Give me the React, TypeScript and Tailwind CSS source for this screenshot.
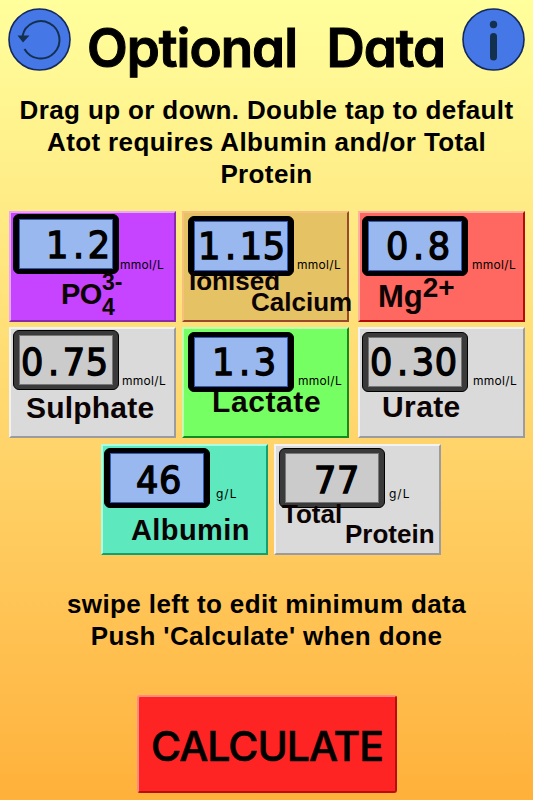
import { clsx } from "clsx";

type Reading = {
  value: string;
  unit: string;
  active: boolean;
  tile: string;
  display: string;
  digits: string;
  unitPos: string;
  label: React.ReactNode;
};

const GREY_TILE = "bg-[#dadada] border-t-[#f2f2f2] border-l-[#f2f2f2] border-r-[#9c9ca0] border-b-[#9c9ca0]";

const TOP_ROW: Reading[] = [
  {
    value: "1.2",
    unit: "mmol/L",
    active: true,
    tile: "bg-[#c643ff] border-t-[#e6a8f0] border-l-[#e6a8f0] border-r-[#8a2aa8] border-b-[#8a2aa8]",
    display: "ml-[2px] mt-[1px]",
    digits: "pl-[26px] pt-px",
    unitPos: "ml-[1px] mt-[45px]",
    label: (
      <div className="flex pl-[50px] text-[29px] leading-[40px]">
        <span className="tracking-[-0.5px]">PO</span>
        <span className="-mt-[4px] flex flex-col text-[23px] leading-[25px]">
          <span>3-</span>
          <span>4</span>
        </span>
      </div>
    ),
  },
  {
    value: "1.15",
    unit: "mmol/L",
    active: true,
    tile: "bg-[#e5c263] border-t-[#f8c07c] border-l-[#f8c07c] border-r-[#98482c] border-b-[#98482c] mr-[3px]",
    display: "ml-[4px] mt-[3px]",
    digits: "pl-[3px]",
    unitPos: "ml-[3px] mt-[45px]",
    label: (
      <div className="-mt-[5px] text-[26px] leading-[21px]">
        <p className="pl-[5px]">Ionised</p>
        <p className="pl-[67px]">Calcium</p>
      </div>
    ),
  },
  {
    value: "0.8",
    unit: "mmol/L",
    active: true,
    tile: "bg-[#ff6860] border-t-[#ffb0a0] border-l-[#ffb0a0] border-r-[#b00c0c] border-b-[#b00c0c]",
    display: "ml-[2px] mt-[3px]",
    digits: "pl-[17px]",
    unitPos: "ml-[4px] mt-[45px]",
    label: (
      <div className="flex pl-[18px] text-[31px] leading-[42px]">
        <span>Mg</span>
        <span className="text-[28px] leading-[24px]">2+</span>
      </div>
    ),
  },
];

const MIDDLE_ROW: Reading[] = [
  {
    value: "0.75",
    unit: "mmol/L",
    active: false,
    tile: GREY_TILE,
    display: "ml-[2px] mt-[1px]",
    digits: "pl-[1px] pt-[2px]",
    unitPos: "ml-[3px] mt-[45px]",
    label: <p className="-mt-px pl-[15px] text-[30px] leading-[38px] tracking-[0.2px]">Sulphate</p>,
  },
  {
    value: "1.3",
    unit: "mmol/L",
    active: true,
    tile: "bg-[#76ff62] border-t-[#c0ffb0] border-l-[#c0ffb0] border-r-[#128b20] border-b-[#128b20] mr-[3px]",
    display: "ml-[4px] mt-[3px]",
    digits: "pl-[17px]",
    unitPos: "ml-[4px] mt-[45px]",
    label: <p className="-mt-px pl-[28px] text-[30px] leading-[22px] tracking-[0.6px]">Lactate</p>,
  },
  {
    value: "0.30",
    unit: "mmol/L",
    active: false,
    tile: GREY_TILE,
    display: "ml-[2px] mt-[3px]",
    digits: "pl-[1px]",
    unitPos: "ml-[5px] mt-[45px]",
    label: <p className="-mt-[4px] pl-[22px] text-[30px] leading-[38px] tracking-[0.4px]">Urate</p>,
  },
];

const BOTTOM_ROW: Reading[] = [
  {
    value: "46",
    unit: "g/L",
    active: true,
    tile: "bg-[#5ee8be] border-t-[#a8ffe4] border-l-[#a8ffe4] border-r-[#12a070] border-b-[#12a070]",
    display: "ml-[1px] mt-[2px]",
    digits: "pl-[25px] pt-[2px]",
    unitPos: "ml-[6px] mt-[41px] tracking-[1px]!",
    label: <p className="mt-[2px] pl-[28px] text-[29px] leading-[40px] tracking-[0.4px]">Albumin</p>,
  },
  {
    value: "77",
    unit: "g/L",
    active: false,
    tile: GREY_TILE,
    display: "ml-[3px] mt-[2px]",
    digits: "pl-[28px] pt-[2px]",
    unitPos: "ml-[4px] mt-[41px] tracking-[1px]!",
    label: (
      <div className="-mt-[4px] text-[26px] leading-[20px]">
        <p className="pl-[6px]">Total</p>
        <p className="pl-[69px]">Protein</p>
      </div>
    ),
  },
];

function Digits({ value }: { value: string }) {
  const [whole, fraction] = value.split(".");
  return (
    <span className="inline-block origin-left scale-x-[0.95] text-[37px] leading-[50px] tracking-[0.8px] [-webkit-text-stroke:1.4px_black]">
      {whole}
      {fraction && <span className="mr-[3px] ml-[4px]">.</span>}
      {fraction}
    </span>
  );
}

function ReadingTile({ reading }: { reading: Reading }) {
  return (
    <div className={clsx("h-[111px] w-[167px] shrink-0 border-2 whitespace-nowrap", reading.tile)}>
      <div className="flex items-start">
        <div
          className={clsx(
            "h-[60px] w-[106px] shrink-0 rounded-[6px] border border-black px-[5px] py-1",
            reading.active ? "bg-black" : "bg-[#3a3a3a]",
            reading.display,
          )}
        >
          <div
            className={clsx(
              "h-[50px] w-[94px] border font-['DejaVu_Sans',sans-serif]",
              reading.active ? "border-[#2d5bb5] bg-[#99b8ef]" : "border-[#777] bg-[#cbcbcb]",
              reading.digits,
            )}
          >
            <Digits value={reading.value} />
          </div>
        </div>
        <span
          className={clsx(
            "font-[Inter,sans-serif] text-[12px] leading-[14px] tracking-[0.3px]",
            reading.unitPos,
          )}
        >
          {reading.unit}
        </span>
      </div>
      <div className="relative font-bold text-[#0c0404]">{reading.label}</div>
    </div>
  );
}

function ResetIcon() {
  return (
    <svg viewBox="0 0 64 64" className="size-16">
      <circle cx="32.5" cy="32.5" r="30.5" fill="#4577e6" stroke="#13295c" strokeWidth="1.6" />
      <path d="M15.5 29A18.7 18.7 0 1 1 17.5 42" fill="none" stroke="#14304f" strokeWidth="2" />
      <path d="M10.5 28.5h12L16 35.5z" fill="#14304f" />
    </svg>
  );
}

function InfoIcon() {
  return (
    <svg viewBox="0 0 64 64" className="size-16">
      <circle cx="32.5" cy="32.5" r="30.5" fill="#4577e6" stroke="#13295c" strokeWidth="1.6" />
      <circle cx="32.5" cy="17.5" r="3.7" fill="#14304f" />
      <path d="M32.5 29.5V50" stroke="#14304f" strokeWidth="7" strokeLinecap="round" />
    </svg>
  );
}

export default function App() {
  return (
    <main className="flex h-[800px] w-[533px] flex-col overflow-hidden bg-linear-to-b from-[#ffff9c] to-[#ffb13a] font-['Liberation_Sans',Arial,sans-serif] text-black">
      <header className="flex h-[94px] items-start pt-[7px] pl-[7px]">
        <button aria-label="Reset">
          <ResetIcon />
        </button>
        <h1 className="w-[390px] pt-[9px] text-center font-[Inter,sans-serif] text-[53px] leading-[64px] font-semibold tracking-[-1px] whitespace-nowrap [font-feature-settings:'cv11'] [word-spacing:17px] [-webkit-text-stroke:1px_black]">
          Optional Data
        </h1>
        <button aria-label="Information">
          <InfoIcon />
        </button>
      </header>

      <p className="h-[117px] text-center text-[26px] leading-8 font-bold tracking-[0.38px]">
        Drag up or down. Double tap to default
        <br />
        Atot requires Albumin and/or Total
        <br />
        Protein
      </p>

      <section className="flex flex-col gap-[5px]">
        <div className="flex gap-[6px] pl-[9px]">
          {TOP_ROW.map((r, i) => (
            <ReadingTile key={i} reading={r} />
          ))}
        </div>
        <div className="flex gap-[6px] pl-[9px]">
          {MIDDLE_ROW.map((r, i) => (
            <ReadingTile key={i} reading={r} />
          ))}
        </div>
        <div className="mt-px flex gap-[6px] pl-[101px]">
          {BOTTOM_ROW.map((r, i) => (
            <ReadingTile key={i} reading={r} />
          ))}
        </div>
      </section>

      <p className="mt-[33px] text-center text-[26px] leading-8 font-bold tracking-[0.38px]">
        swipe left to edit minimum data
        <br />
        Push 'Calculate' when done
      </p>

      <button className="mt-[43px] ml-[137px] h-[98px] w-[260px] rounded-[3px] border-2 border-t-[#ff8a80] border-r-[#b80d0d] border-b-[#b80d0d] border-l-[#ff8a80] bg-[#ff2424] pt-[5px] font-[Inter,sans-serif] text-[41px] font-medium tracking-[-1px] [-webkit-text-stroke:0.6px_black]">
        CALCULATE
      </button>
    </main>
  );
}
